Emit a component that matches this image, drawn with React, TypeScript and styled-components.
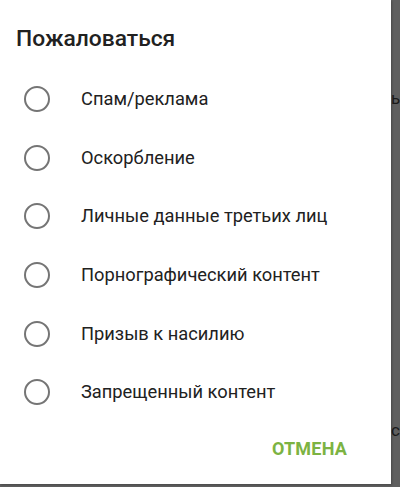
import React from "react";
import styled, { createGlobalStyle } from "styled-components";

const Global = createGlobalStyle`
  html, body { margin: 0; padding: 0; }
  body { background: #5f5f5f; font-family: Roboto, "Noto Sans", sans-serif; }
`;

const Screen = styled.div`
  position: relative;
  width: 400px;
  height: 487px;
  overflow: hidden;
  background: #5f5f5f;
`;

const Behind = styled.span<{ $top: number }>`
  position: absolute;
  left: 391px;
  top: ${(p) => p.$top}px;
  font-size: 17px;
  color: #1a1a1a;
  font-family: Roboto, sans-serif;
`;

const Dialog = styled.div`
  position: relative;
  width: 391px;
  height: 484px;
  background: #ffffff;
  box-sizing: border-box;
  display: flex;
  flex-direction: column;
  box-shadow: 1px 1px 2px rgba(0, 0, 0, 0.25);
`;

const Title = styled.h1`
  margin: 0;
  padding: 26px 0 0 16px;
  height: 70px;
  box-sizing: border-box;
  font-size: 22.8px;
  font-weight: 500;
  line-height: 26px;
  color: #212121;
`;

const List = styled.div`
  display: flex;
  flex-direction: column;
`;

const Row = styled.label`
  display: flex;
  align-items: center;
  height: 58.6px;
  padding-left: 24px;
  box-sizing: border-box;
`;

const Radio = styled.span`
  width: 22px;
  height: 22px;
  border: 2.5px solid #757575;
  border-radius: 50%;
  flex: none;
`;

const Label = styled.span`
  margin-left: 31px;
  font-size: 18.3px;
  color: #212121;
  line-height: 22px;
`;

const Actions = styled.div`
  display: flex;
  justify-content: flex-end;
  padding: 16px 44px 0 0;
`;

const Cancel = styled.button`
  border: none;
  background: none;
  padding: 0;
  font-family: Roboto, sans-serif;
  font-size: 18px;
  font-weight: 700;
  color: #7cb342;
  letter-spacing: 0.2px;
`;

const items = [
  "Спам/реклама",
  "Оскорбление",
  "Личные данные третьих лиц",
  "Порнографический контент",
  "Призыв к насилию",
  "Запрещенный контент",
];

export default function App() {
  return (
    <>
      <Global />
      <Screen>
        <Behind $top={88}>ы</Behind>
        <Behind $top={420}>ст</Behind>
        <Dialog>
          <Title>Пожаловаться</Title>
          <List>
            {items.map((t) => (
              <Row key={t}>
                <Radio />
                <Label>{t}</Label>
              </Row>
            ))}
          </List>
          <Actions>
            <Cancel>ОТМЕНА</Cancel>
          </Actions>
        </Dialog>
      </Screen>
    </>
  );
}
